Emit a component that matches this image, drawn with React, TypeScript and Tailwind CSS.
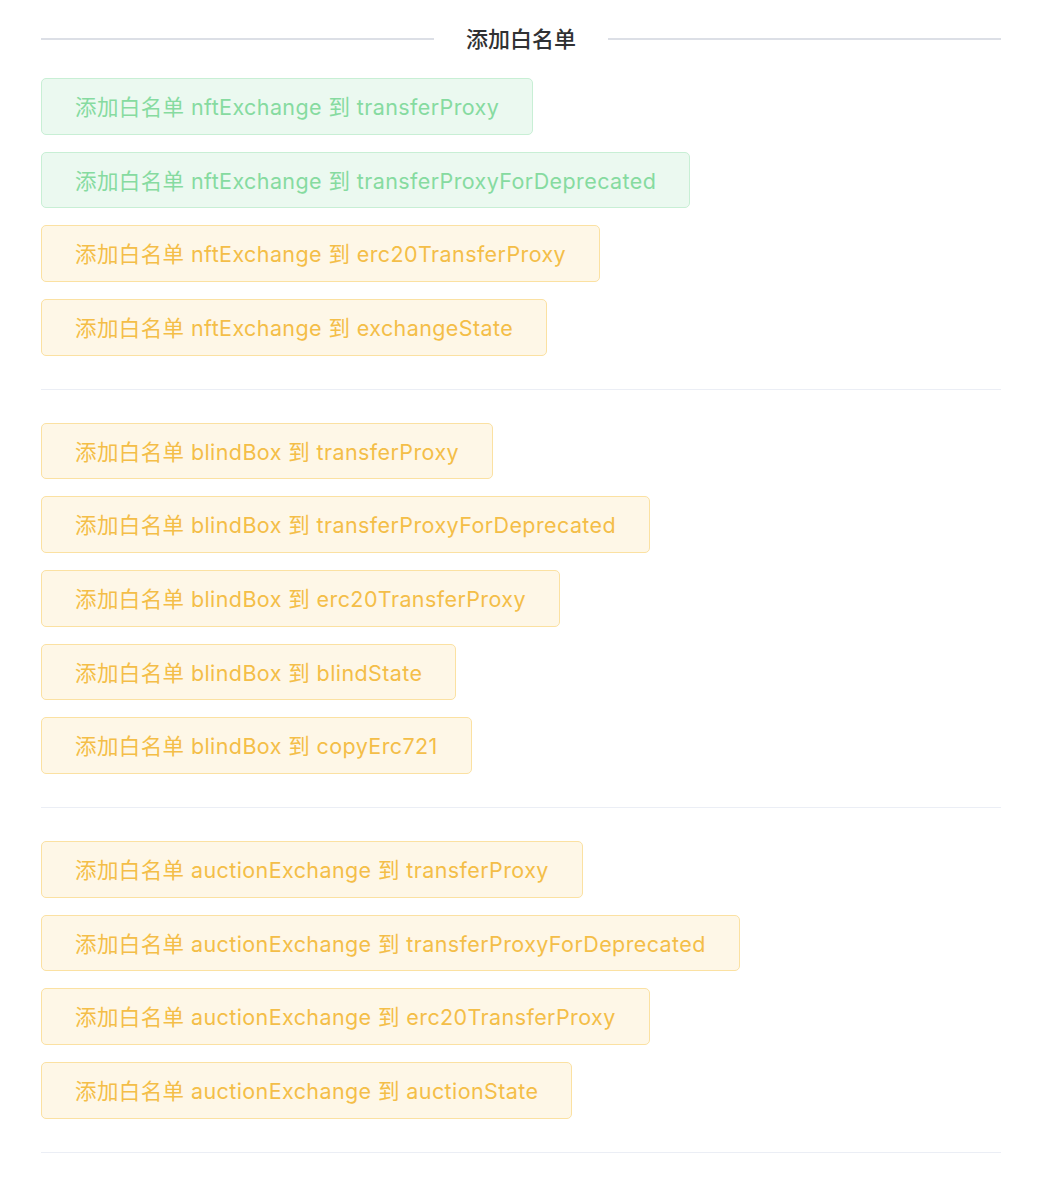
import React from 'react';

type Tone = 'green' | 'yellow';

const SECTIONS: { from: string; items: { to: string; tone: Tone }[] }[] = [
  {
    from: 'nftExchange',
    items: [
      { to: 'transferProxy', tone: 'green' },
      { to: 'transferProxyForDeprecated', tone: 'green' },
      { to: 'erc20TransferProxy', tone: 'yellow' },
      { to: 'exchangeState', tone: 'yellow' },
    ],
  },
  {
    from: 'blindBox',
    items: [
      { to: 'transferProxy', tone: 'yellow' },
      { to: 'transferProxyForDeprecated', tone: 'yellow' },
      { to: 'erc20TransferProxy', tone: 'yellow' },
      { to: 'blindState', tone: 'yellow' },
      { to: 'copyErc721', tone: 'yellow' },
    ],
  },
  {
    from: 'auctionExchange',
    items: [
      { to: 'transferProxy', tone: 'yellow' },
      { to: 'transferProxyForDeprecated', tone: 'yellow' },
      { to: 'erc20TransferProxy', tone: 'yellow' },
      { to: 'auctionState', tone: 'yellow' },
    ],
  },
];

const FONT = { fontFamily: 'Inter, "Noto Sans CJK SC", sans-serif' };

const WhitelistButton = ({ from, to, tone }: { from: string; to: string; tone: Tone }) => (
  <button
    className={
      tone === 'green'
        ? 'h-[56.67px] px-[33px] pt-[3px] rounded-[5px] border border-[#c8efd5] bg-[#ebf9f0] text-[#86dba0] text-[21.5px] tracking-[0.4px] leading-none whitespace-nowrap'
        : 'h-[56.67px] px-[33px] pt-[3px] rounded-[5px] border border-[#fbe1a2] bg-[#fef7e7] text-[#f4be48] text-[21.5px] tracking-[0.4px] leading-none whitespace-nowrap'
    }
  >
    添加白名单 {from} 到 {to}
  </button>
);

export default function App() {
  return (
    <div className="bg-white min-h-screen px-[41px] pt-[18px] w-[1042px]" style={FONT}>
      <div className="flex items-center h-[42px]">
        <div className="flex-1 h-[2px] bg-[#dcdfe6]" />
        <span className="px-[32px] text-[22px] font-medium text-[#303133]">添加白名单</span>
        <div className="flex-1 h-[2px] bg-[#dcdfe6]" />
      </div>
      <div className="pt-[18px]">
        {SECTIONS.map((section) => (
          <div key={section.from}>
            <div className="flex flex-col items-start gap-[17px]">
              {section.items.map((item) => (
                <WhitelistButton key={item.to} from={section.from} to={item.to} tone={item.tone} />
              ))}
            </div>
            <div className="my-[33px] h-px bg-[#ebeef5]" />
          </div>
        ))}
      </div>
    </div>
  );
}
